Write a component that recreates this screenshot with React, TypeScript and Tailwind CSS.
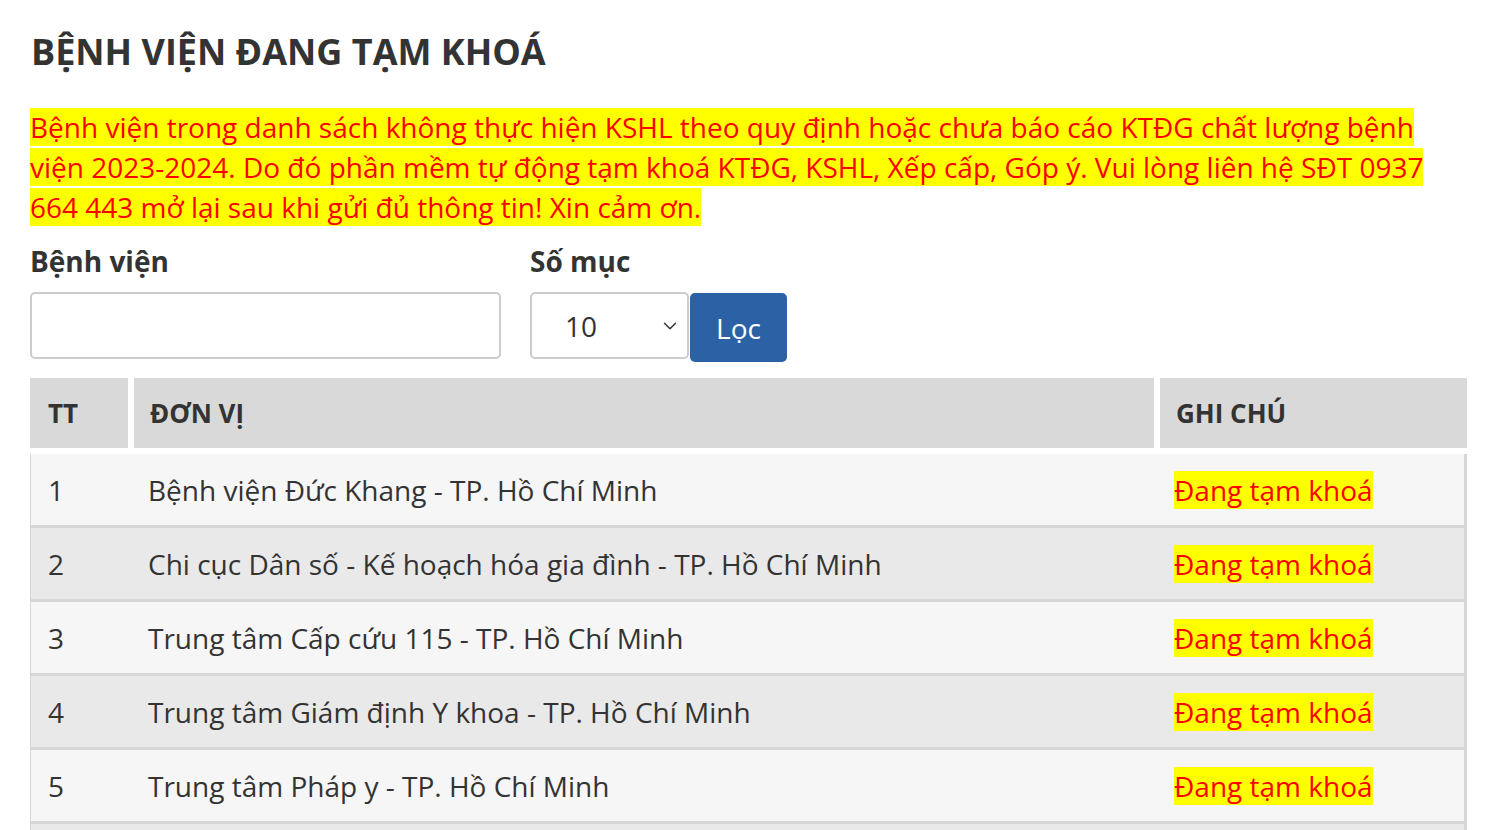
import { ChevronDown } from "lucide-react";

const rows = [
  "Bệnh viện Đức Khang - TP. Hồ Chí Minh",
  "Chi cục Dân số - Kế hoạch hóa gia đình - TP. Hồ Chí Minh",
  "Trung tâm Cấp cứu 115 - TP. Hồ Chí Minh",
  "Trung tâm Giám định Y khoa - TP. Hồ Chí Minh",
  "Trung tâm Pháp y - TP. Hồ Chí Minh",
];

export default function App() {
  return (
    <main
      className="w-full h-[830px] overflow-hidden bg-white px-[30px] pt-[28px] text-[#333]"
      style={{ fontFamily: '"Open Sans", "Noto Sans", sans-serif' }}
    >
      <h1 className="text-[36px] leading-[48px] font-bold text-[#333] pl-[1px]">
        BỆNH VIỆN ĐANG TẠM KHOÁ
      </h1>

      <p className="mt-[31px] text-[28px] leading-[40px] pr-[40px]">
        <span className="bg-[#ffff00] text-[#ff0000]">
          Bệnh viện trong danh sách không thực hiện KSHL theo quy định hoặc chưa báo cáo KTĐG chất lượng bệnh
          viện 2023-2024. Do đó phần mềm tự động tạm khoá KTĐG, KSHL, Xếp cấp, Góp ý. Vui lòng liên hệ SĐT 0937
          664 443 mở lại sau khi gửi đủ thông tin! Xin cảm ơn.
        </span>
      </p>

      <div className="mt-[15px] flex items-start">
        <div className="flex flex-col w-[471px]">
          <label className="text-[28px] leading-[38px] font-bold mb-[12px]">Bệnh viện</label>
          <input
            type="text"
            className="h-[67px] w-full rounded-[5px] border-2 border-[#cccccc] bg-white px-3 outline-none"
          />
        </div>
        <div className="ml-[29px] flex flex-col">
          <label className="text-[28px] leading-[38px] font-bold mb-[12px]">Số mục</label>
          <div className="flex items-start">
            <div className="h-[67px] w-[159px] rounded-[5px] border-2 border-[#cccccc] bg-white flex items-center pl-[33px] pr-[6px] justify-between">
              <span className="text-[28px] text-[#333]">10</span>
              <ChevronDown size={22} strokeWidth={1.6} className="text-[#333]" />
            </div>
            <button className="ml-[1px] mt-[1px] h-[69px] w-[97px] rounded-[5px] bg-[#2b62a6] text-white text-[28px]">
              Lọc
            </button>
          </div>
        </div>
      </div>

      <div className="mt-[16px] w-[1437px]">
        <div className="grid grid-cols-[98px_1020px_307px] gap-x-[6px] h-[70px]">
          <div className="bg-[#d9d9d9] flex items-center pl-[18px] text-[26px] font-bold">TT</div>
          <div className="bg-[#d9d9d9] flex items-center pl-[16px] text-[26px] font-bold">ĐƠN VỊ</div>
          <div className="bg-[#d9d9d9] flex items-center pl-[16px] text-[26px] font-bold">GHI CHÚ</div>
        </div>
        <div className="mt-[6px]">
          {rows.map((name, i) => (
            <div
              key={name}
              className={`grid grid-cols-[98px_1020px_307px] gap-x-[6px] h-[74px] items-center border-b-[3px] border-r-[3px] border-l border-[#d6d6d6] ${
                i % 2 === 0 ? "bg-[#f6f6f6]" : "bg-[#e9e9e9]"
              }`}
            >
              <div className="pl-[17px] text-[28px]">{i + 1}</div>
              <div className="pl-[13px] text-[28px]">{name}</div>
              <div className="pl-[13px] text-[28px]">
                <span className="bg-[#ffff00] text-[#ff0000]">Đang tạm khoá</span>
              </div>
            </div>
          ))}
          <div className="h-[74px] bg-[#e9e9e9] border-r-[3px] border-l border-[#d6d6d6]" />
        </div>
      </div>
    </main>
  );
}
